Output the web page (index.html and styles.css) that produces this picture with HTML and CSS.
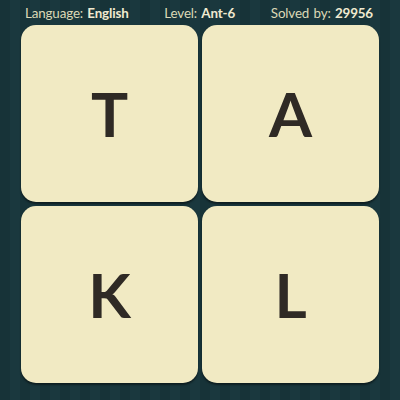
FILE: index.html
```html
<!DOCTYPE html>
<html>
<head>
<meta charset="utf-8">
<link rel="stylesheet" href="styles.css">
</head>
<body>
<div class="page">
  <div class="header">
    <span class="item">Language: <b>English</b></span>
    <span class="item">Level: <b>Ant-6</b></span>
    <span class="item">Solved by: <b>29956</b></span>
  </div>
  <div class="grid">
    <div class="tile">T</div>
    <div class="tile">A</div>
    <div class="tile">K</div>
    <div class="tile">L</div>
  </div>
</div>
</body>
</html>
```
FILE: styles.css
```css
html, body {
  margin: 0;
  padding: 0;
}
body {
  width: 400px;
  height: 400px;
  overflow: hidden;
  background-color: #173338;
  background-image: repeating-linear-gradient(90deg, #173338 0px, #173338 10px, #1a383e 10px, #1a383e 20px);
  font-family: Lato, "Open Sans", sans-serif;
}
.page {
  display: flex;
  flex-direction: column;
  align-items: center;
}
.header {
  width: 400px;
  height: 25px;
  display: flex;
  justify-content: space-between;
  align-items: center;
  padding: 0 27px 0 25px;
  box-sizing: border-box;
  color: #dcd8b6;
  font-size: 13.4px;
  letter-spacing: -0.15px;
  word-spacing: 1px;
}
.header b {
  font-weight: 700;
  color: #f0ead0;
}
.grid {
  display: grid;
  grid-template-columns: 177px 177px;
  grid-template-rows: 177px 177px;
  gap: 4px;
}
.tile {
  background: #f1eac3;
  border-radius: 15px;
  box-shadow: 0 2px 2px rgba(0,0,0,0.45);
  display: flex;
  align-items: center;
  justify-content: center;
  color: #2f2a25;
  font-size: 62px;
  font-weight: 700;
  line-height: 1;
  padding-bottom: 2px;
  box-sizing: border-box;
}
```
